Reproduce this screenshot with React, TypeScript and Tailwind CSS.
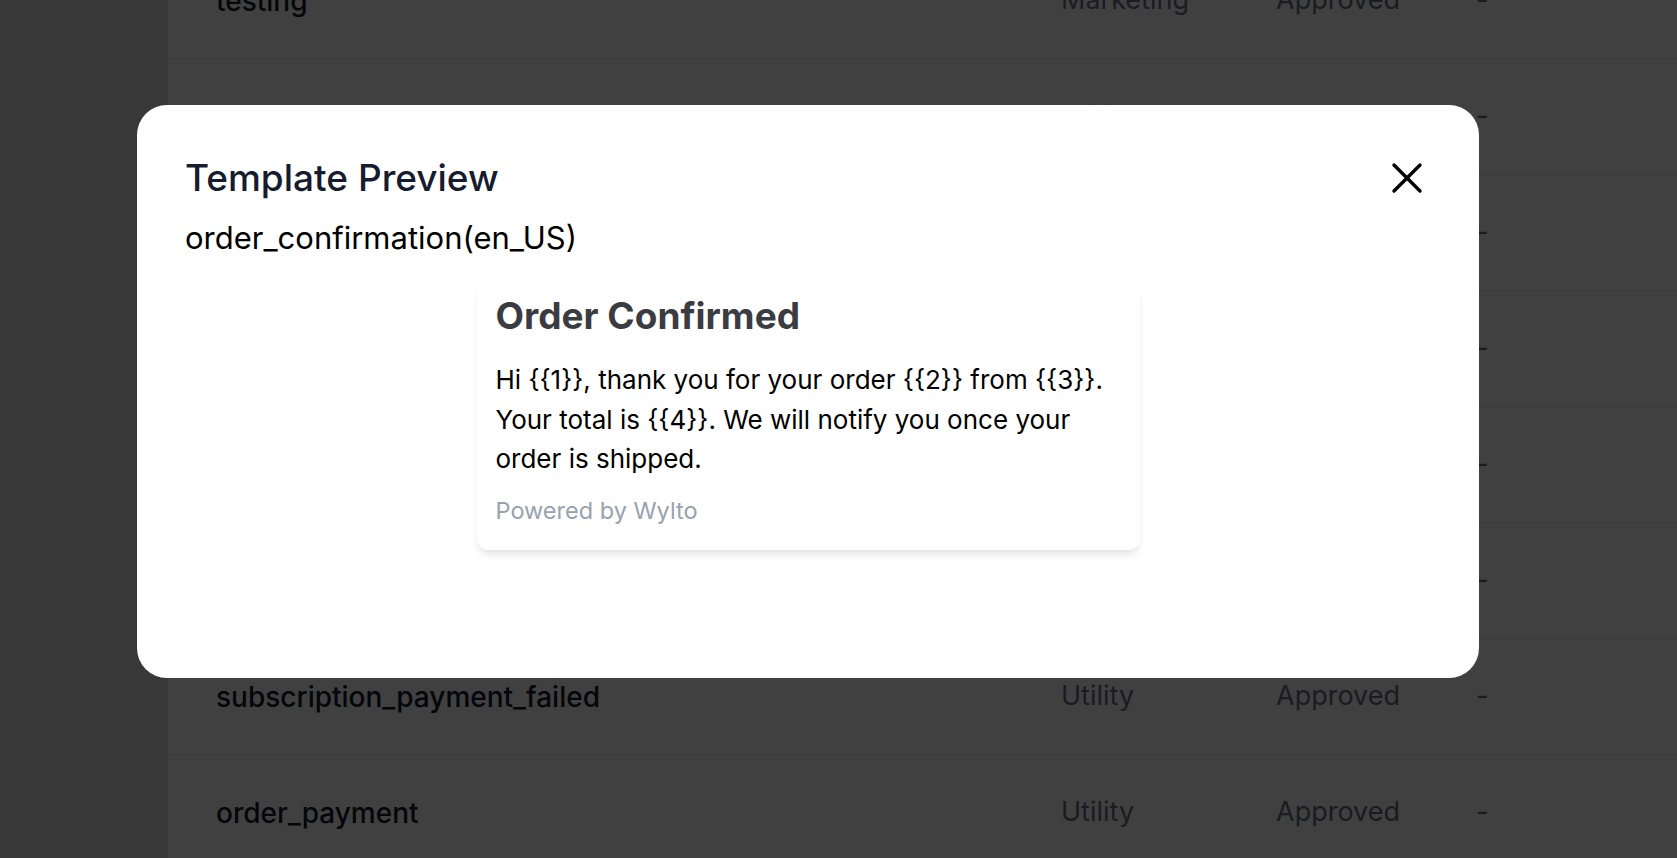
import React from "react";

const rows = [
    { name: "testing", category: "Marketing" },
    { name: "order_shipped", category: "Utility" },
    { name: "order_delivered", category: "Utility" },
    { name: "abandoned_cart", category: "Marketing" },
    { name: "payment_reminder", category: "Utility" },
    { name: "welcome_message", category: "Marketing" },
    { name: "subscription_payment_failed", category: "Utility" },
    { name: "order_payment", category: "Utility" },
];

function CloseIcon() {
    return (
        <svg width="32" height="32" viewBox="0 0 32 32" fill="none" stroke="currentColor" strokeWidth="3.4" strokeLinecap="round">
            <line x1="3" y1="3" x2="29" y2="29" />
            <line x1="29" y1="3" x2="3" y2="29" />
        </svg>
    );
}

export default function App() {
    return (
        <div className="relative w-full h-[858px] overflow-hidden font-['Inter','Liberation_Sans',sans-serif]">
            {/* Page underneath */}
            <div className="flex h-full">
                <aside className="w-[168px] shrink-0 bg-[#e0e0e0]" />
                <main className="flex-1 bg-white">
                    <div className="-mt-[57px]">
                        {rows.map((r) => (
                            <div key={r.name} className="h-[116px] border-b border-gray-200 grid grid-cols-[845px_215px_200px_1fr] items-center pl-12 text-[27px]">
                                <span className="font-medium text-[28px] text-gray-900">{r.name}</span>
                                <span className="text-gray-500">{r.category}</span>
                                <span className="text-gray-500">Approved</span>
                                <span className="text-gray-500">-</span>
                            </div>
                        ))}
                    </div>
                </main>
            </div>

            {/* Overlay + modal */}
            <div className="absolute inset-0 bg-black/75 pl-[137px] pt-[105px]">
                <div className="w-[1342px] h-[573px] bg-white rounded-[30px] px-12 pt-[53px]">
                    <div className="flex items-center justify-between">
                        <h2 className="text-[37px] leading-[40px] font-medium text-[#161b2e]">Template Preview</h2>
                        <button className="mr-2 text-black">
                            <CloseIcon />
                        </button>
                    </div>
                    <p className="mt-[22px] text-[31px] leading-[36px] text-black">order_confirmation(en_US)</p>

                    <div className="mt-[26px] mx-auto w-[663px] bg-white rounded-xl shadow-[0_6px_8px_-2px_rgba(0,0,0,0.12)] px-[19px] pt-3 pb-6">
                        <h3 className="text-[37px] leading-[44px] font-bold text-[#3a3c42]">Order Confirmed</h3>
                        <p className="mt-[22px] text-[26px] leading-[39.5px] text-black">
                            Hi {"{{1}}"}, thank you for your order {"{{2}}"} from {"{{3}}"}. Your total is {"{{4}}"}. We will notify you once your order is shipped.
                        </p>
                        <p className="mt-[17px] text-[23.5px] leading-[30px] text-gray-400">Powered by Wylto</p>
                    </div>
                </div>
            </div>
        </div>
    );
}
